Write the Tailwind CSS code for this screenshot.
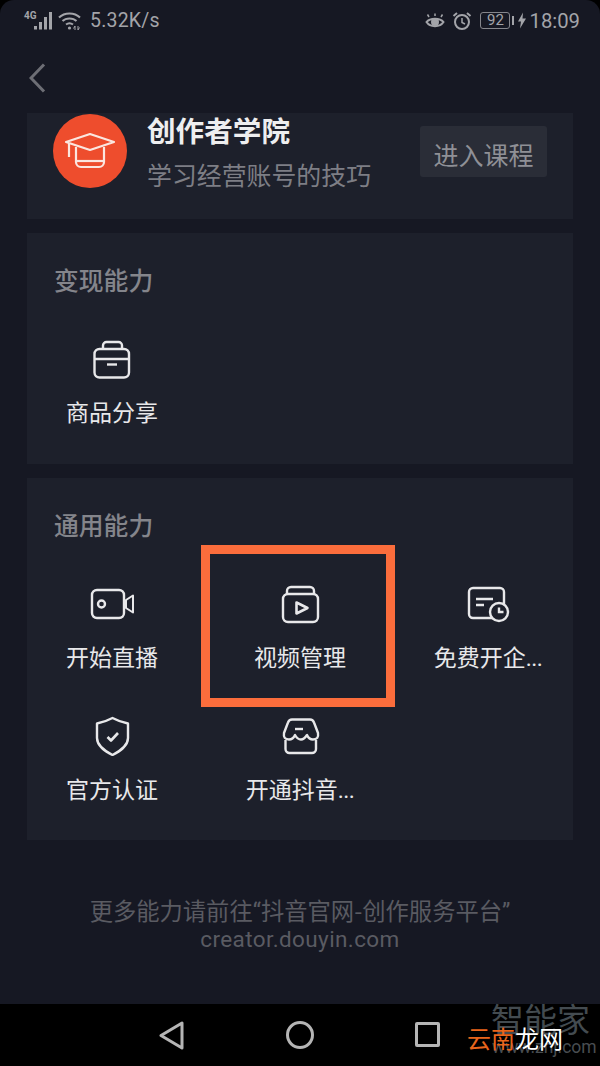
<!DOCTYPE html>
<html lang="zh-CN">
<head>
    <meta charset="UTF-8">
    <meta name="viewport" content="width=device-width, initial-scale=1.0">
    <title>创作者学院</title>
    <script src="https://cdn.jsdelivr.net/npm/@tailwindcss/browser@4"></script>
</head>
<body class="bg-black">
<div class="relative w-[600px] h-[1066px] overflow-hidden bg-black font-['Noto_Sans_CJK_SC',sans-serif]">

    <div class="h-[1004px] bg-[#161823] rounded-t-[14px] flex flex-col">
        <!-- status bar -->
        <div class="h-[42px] flex items-center text-[#a3a4a9] font-['Roboto',sans-serif]">
            <span class="ml-[24px] w-[11px] -mt-[11px] text-[10px] leading-none font-bold">4G</span>
            <svg class="ml-[-1px]" width="20" height="20" viewBox="0 0 20 20" fill="#a3a4a9">
                <rect x="0" y="15" width="3" height="3.500"/><rect x="5" y="11" width="3" height="7.500"/><rect x="10" y="6" width="3" height="12.500"/><rect x="15" y="1" width="3" height="17.500"/>
            </svg>
            <svg class="ml-[4px]" width="24" height="20" viewBox="0 0 24 20" fill="none" stroke="#a3a4a9" stroke-width="2">
                <path d="M1 6.500C6.500 1 16.500 1 22 6.500"/><path d="M4.500 10C8 6.500 15 6.500 18.500 10"/><path d="M8 13.500C10 12 13 12 15 13.500"/>
                <circle cx="11.500" cy="17" r="1.600" fill="#a3a4a9" stroke="none"/>
                <path d="M17 19V15l-1.500 2.500M20 15v4l1.500-2.500" stroke-width="1"/>
            </svg>
            <span class="ml-[8px] text-[19.500px] leading-none tracking-[0.2px]">5.32K/s</span>
            <div class="ml-auto flex items-center">
                <svg width="20" height="20" viewBox="0 0 20 20" fill="none" stroke="#a3a4a9" stroke-width="2">
                    <path d="M1.500 11C5 6.500 15 6.500 18.500 11C15 16.500 5 16.500 1.500 11Z"/><circle cx="10" cy="11" r="3" fill="#a3a4a9"/>
                    <path d="M4 6L2.500 3.500M10 5V2.500M16 6l1.500-2.500" stroke-width="1.500"/>
                </svg>
                <svg class="ml-[7px]" width="20" height="20" viewBox="0 0 20 20" fill="none" stroke="#a3a4a9" stroke-width="2">
                    <circle cx="10" cy="11" r="7"/><path d="M10 7v4.500l3 1.500" stroke-width="1.500"/><path d="M1.500 5L5 2M18.500 5L15 2"/>
                </svg>
                <div class="ml-[8px] w-[30px] h-[17px] border border-[#85868c] rounded-[3px] text-[15px] leading-[15px] text-center">92</div>
                <div class="ml-[2px] w-[2px] h-[9px] bg-[#a3a4a9]"></div>
                <svg class="ml-[4px]" width="8" height="17" viewBox="0 0 8 16" fill="#a3a4a9"><path d="M5 0L0 9h3l-1 7 6-10H4.500Z"/></svg>
                <span class="ml-[3px] mr-[20px] text-[20.300px] leading-none">18:09</span>
            </div>
        </div>
        <!-- nav header -->
        <div class="h-[71px] pl-[29px] pt-[21px]">
            <svg width="17" height="30" viewBox="0 0 17 30" fill="none" stroke="#6d6e75" stroke-width="3"><path d="M15 1.500L2 15l13 13.500"/></svg>
        </div>

        <div class="flex flex-col gap-[14px] mx-[27px]">
            <!-- academy -->
            <div class="h-[106px] bg-[#1d202b] pl-[26px] pr-[26px] flex">
                <div class="w-[74px] h-[74px] mt-[1px] rounded-full bg-[#ee4d2d] shrink-0">
                    <svg width="74" height="74" viewBox="0 0 74 74" fill="none" stroke="#fbe6df" stroke-width="2.200" stroke-linejoin="round">
                        <path d="M13 28L37 20l24 8-24 8Z"/><path d="M16 29V43"/><path d="M23 33V48a5 5 0 0 0 5 5H46a5 5 0 0 0 5-5V33"/><path d="M23 47H51"/>
                    </svg>
                </div>
                <div class="ml-[21px]">
                    <div class="-mt-[1px] -ml-[1px] text-[28.600px] leading-[36px] font-bold text-[#eeeeef]">创作者学院</div>
                    <div class="mt-[9px] -ml-[1px] text-[24.900px] leading-[35px] text-[#7d7e85]">学习经营账号的技巧</div>
                </div>
                <div class="ml-auto mt-[13px] w-[127px] h-[51px] pt-[7px] bg-[#2a2d37] rounded-[3px] flex items-center justify-center text-[25px] text-[#8f9096]">进入课程</div>
            </div>

            <!-- monetize -->
            <div class="h-[231px] bg-[#1d202b]">
                <div class="ml-[27px] mt-[31px] h-[30px] text-[24.800px] leading-[30px] font-medium text-[#84858b]">变现能力</div>
                <div class="grid grid-cols-[160px_160px_160px] gap-x-[28px] px-[5px] mt-[46px]">
                    <div class="flex flex-col items-center">
                        <svg width="40" height="40" viewBox="0 0 40 40" fill="none" stroke="#e8e8ea" stroke-width="2.400">
                            <rect x="2.500" y="9" width="34.500" height="28.500" rx="5"/><path d="M11 9V5.500A3.500 3.500 0 0 1 14.500 2H26.500A3.500 3.500 0 0 1 30 5.500V9"/><path d="M2.500 19H37"/><path d="M15 24.500H25"/>
                        </svg>
                        <div class="mt-[16px] h-[30px] text-[23px] leading-[30px] text-[#e8e8ea]">商品分享</div>
                    </div>
                </div>
            </div>

            <!-- general -->
            <div class="h-[362px] bg-[#1d202b]">
                <div class="ml-[27px] mt-[31px] h-[30px] text-[24.800px] leading-[30px] font-medium text-[#84858b]">通用能力</div>
                <div class="grid grid-cols-[160px_160px_160px] gap-x-[28px] gap-y-[45px] px-[5px] mt-[45px]">
                    <div class="flex flex-col items-center">
                        <svg width="48" height="40" viewBox="0 0 48 40" fill="none" stroke="#e8e8ea" stroke-width="2.400">
                            <rect x="4" y="6" width="32" height="28" rx="5"/><circle cx="13.500" cy="20" r="3.500"/><path d="M38 16L45 11.500V28.500L38 24Z" stroke-linejoin="round" stroke-width="2"/>
                        </svg>
                        <div class="mt-[17px] h-[30px] text-[23px] leading-[30px] text-[#e8e8ea]">开始直播</div>
                    </div>
                    <div class="flex flex-col items-center">
                        <svg width="48" height="40" viewBox="0 0 48 40" fill="none" stroke="#e8e8ea" stroke-width="2.400" stroke-linejoin="round">
                            <rect x="7" y="10" width="35" height="28" rx="5"/><path d="M11 10V7a4 4 0 0 1 4-4H34a4 4 0 0 1 4 4V10"/><path d="M20.500 18.500L31.500 24L20.500 29.500Z" stroke-width="2.600"/>
                        </svg>
                        <div class="mt-[17px] h-[30px] text-[23px] leading-[30px] text-[#e8e8ea]">视频管理</div>
                    </div>
                    <div class="flex flex-col items-center">
                        <svg width="48" height="40" viewBox="0 0 48 40" fill="none" stroke="#e8e8ea" stroke-width="2.400">
                            <rect x="5" y="4" width="35" height="30" rx="4"/><path d="M12 15H29M12 21H20"/><circle cx="35" cy="28" r="9" fill="#1d202b"/><path d="M35 23.500V28H39.500"/>
                        </svg>
                        <div class="mt-[17px] h-[30px] text-[23px] leading-[30px] text-[#e8e8ea] whitespace-nowrap">免费开企<span class="font-['Roboto',sans-serif] tracking-[-0.5px]">...</span></div>
                    </div>
                    <div class="flex flex-col items-center">
                        <svg width="40" height="40" viewBox="0 0 40 40" fill="none" stroke="#e8e8ea" stroke-width="2.400" stroke-linejoin="round">
                            <path d="M20.500 2Q28 6 36 7.500V22C36 30 28 35 20.500 39C13 35 5 30 5 22V7.500Q13 6 20.500 2Z"/><path d="M15.500 21L19 24.500L26 17" stroke-width="2.600"/>
                        </svg>
                        <div class="mt-[17px] h-[30px] text-[23px] leading-[30px] text-[#e8e8ea]">官方认证</div>
                    </div>
                    <div class="flex flex-col items-center">
                        <svg width="48" height="40" viewBox="0 0 48 40" fill="none" stroke="#e8e8ea" stroke-width="2.400" stroke-linejoin="round">
                            <path d="M16 3.500H34Q37 3.500 38 6.500L42 17Q43 23.500 37 23.500Q33 23.500 31 19Q28 23.500 25 23.500Q21.500 23.500 19 19Q17 23.500 13 23.500Q7 23.500 8 17L12 6.500Q13 3.500 16 3.500Z"/><path d="M9.500 24V33a4 4 0 0 0 4 4H36a4 4 0 0 0 4-4V24"/><path d="M19 13H27"/>
                        </svg>
                        <div class="mt-[17px] h-[30px] text-[23px] leading-[30px] text-[#e8e8ea] whitespace-nowrap">开通抖音<span class="font-['Roboto',sans-serif] tracking-[-0.5px]">...</span></div>
                    </div>
                </div>
            </div>
        </div>

        <div class="mt-[56px] text-center text-[23.300px] leading-[29px] text-[#5a5b62]">
            <div>更多能力请前往<span class="font-['Roboto',sans-serif]">“</span>抖音官网-创作服务平台<span class="font-['Roboto',sans-serif]">”</span></div>
            <div class="-mt-[2px] font-['Roboto',sans-serif] text-[22.500px] tracking-[0.4px]">creator.douyin.com</div>
        </div>
    </div>

    <!-- nav bar -->
    <div class="h-[62px] bg-black relative">
        <svg class="absolute left-[158px] top-[17px]" width="27" height="30" viewBox="0 0 27 30" fill="none" stroke="#b5b5b5" stroke-width="3" stroke-linejoin="round"><path d="M24 2V27L3 14.500Z"/></svg>
        <div class="absolute left-[286px] top-[17px] w-[28px] h-[28px] rounded-full border-[3px] border-[#b5b5b5]"></div>
        <div class="absolute left-[415px] top-[18px] w-[25px] h-[25px] rounded-[2px] border-[3px] border-[#b5b5b5]"></div>
    </div>

    <!-- highlight box -->
    <div class="absolute left-[201px] top-[545px] w-[194px] h-[162px] border-[9px] border-[#fb6d3c]"></div>

    <!-- watermark -->
    <div class="absolute left-[491px] top-[998px] text-[33px] leading-[40px] text-[#434b50] whitespace-nowrap">智能家</div>
    <div class="absolute left-[492px] top-[1036px] text-[17.500px] leading-[22px] text-[#484d51] font-['Roboto',sans-serif] whitespace-nowrap">www.znj.com</div>
    <div class="absolute left-[467px] top-[1022px] text-[24px] leading-[32px] whitespace-nowrap"><span class="text-[#e8651c]">云南</span><span class="text-white">龙网</span></div>
</div>
</body>
</html>
